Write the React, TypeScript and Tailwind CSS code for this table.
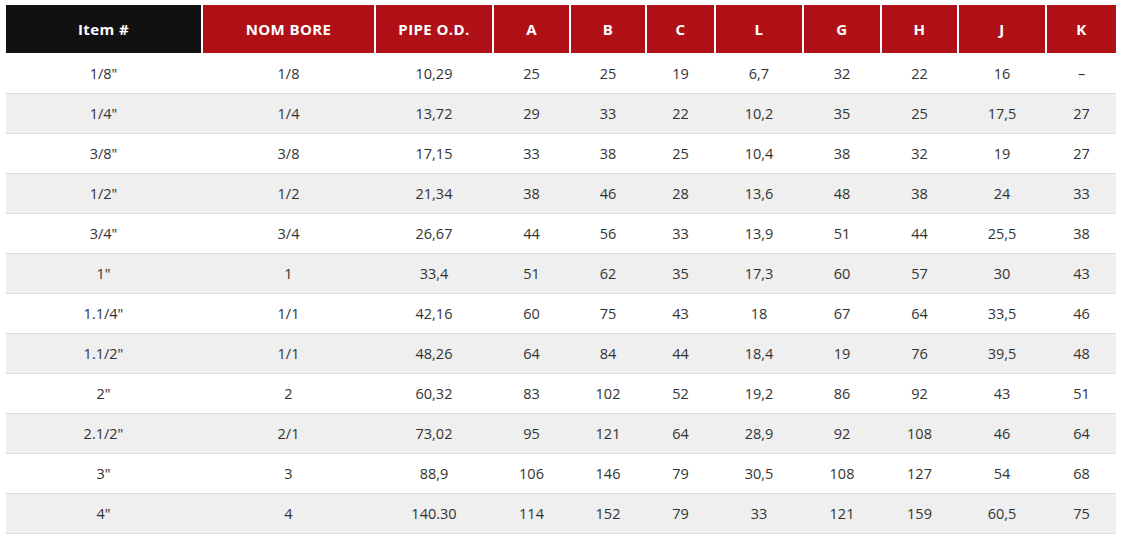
import React from "react";

const headers = ["Item #", "NOM BORE", "PIPE O.D.", "A", "B", "C", "L", "G", "H", "J", "K"];

const rows: string[][] = [
  ['1/8"', "1/8", "10,29", "25", "25", "19", "6,7", "32", "22", "16", "–"],
  ['1/4"', "1/4", "13,72", "29", "33", "22", "10,2", "35", "25", "17,5", "27"],
  ['3/8"', "3/8", "17,15", "33", "38", "25", "10,4", "38", "32", "19", "27"],
  ['1/2"', "1/2", "21,34", "38", "46", "28", "13,6", "48", "38", "24", "33"],
  ['3/4"', "3/4", "26,67", "44", "56", "33", "13,9", "51", "44", "25,5", "38"],
  ['1"', "1", "33,4", "51", "62", "35", "17,3", "60", "57", "30", "43"],
  ['1.1/4"', "1/1", "42,16", "60", "75", "43", "18", "67", "64", "33,5", "46"],
  ['1.1/2"', "1/1", "48,26", "64", "84", "44", "18,4", "19", "76", "39,5", "48"],
  ['2"', "2", "60,32", "83", "102", "52", "19,2", "86", "92", "43", "51"],
  ['2.1/2"', "2/1", "73,02", "95", "121", "64", "28,9", "92", "108", "46", "64"],
  ['3"', "3", "88,9", "106", "146", "79", "30,5", "108", "127", "54", "68"],
  ['4"', "4", "140.30", "114", "152", "79", "33", "121", "159", "60,5", "75"],
];

export default function App() {
  return (
    <div
      className="bg-white w-[1121px] h-[538px] pt-[5px] pl-[6px]"
      style={{ fontFamily: '"Open Sans", "Liberation Sans", sans-serif' }}
    >
      <div className="w-[1110px]">
        <div className="grid grid-cols-[195px_171px_116px_75px_74px_67px_86px_76px_75px_86px_69px] gap-x-[2px] h-[48px] mb-[1px]">
          {headers.map((h, i) => (
            <div
              key={h}
              className={`flex items-center justify-center text-white font-bold text-[15px] tracking-[0.4px] ${
                i === 0 ? "bg-[#111111]" : "bg-[#b01117]"
              }`}
            >
              {h}
            </div>
          ))}
        </div>
        {rows.map((r, ri) => (
          <div
            key={ri}
            className={`grid grid-cols-[195px_171px_116px_75px_74px_67px_86px_76px_75px_86px_69px] gap-x-[2px] h-[40px] border-b border-[#dcdcdc] ${
              ri % 2 === 1 ? "bg-[#efefef]" : "bg-white"
            }`}
          >
            {r.map((c, ci) => (
              <div
                key={ci}
                className="flex items-center justify-center text-[14.5px] text-[#333333]"
              >
                {c}
              </div>
            ))}
          </div>
        ))}
      </div>
    </div>
  );
}
